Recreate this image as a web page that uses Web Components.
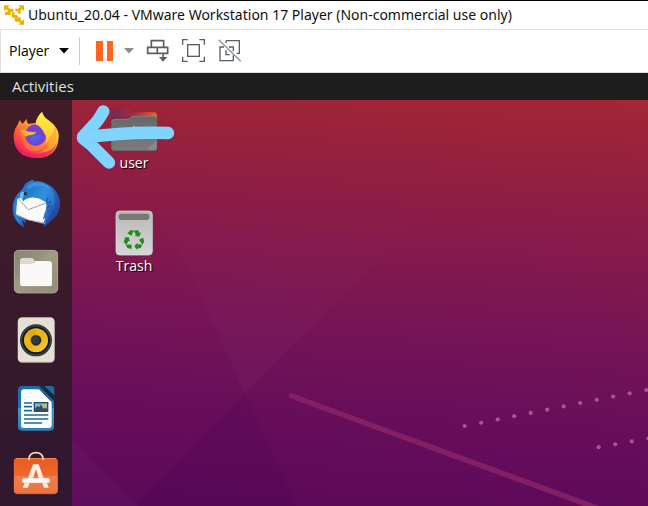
<!DOCTYPE html>
<html lang="en">
<head>
<meta charset="utf-8">
<title>Ubuntu_20.04 - VMware Workstation 17 Player</title>
<style>
html,body{margin:0;height:100%}
body{font-family:"Open Sans","Noto Sans",sans-serif}
</style>
</head>
<body>
<vm-window>
  <title-bar slot="title">Ubuntu_20.04 - VMware Workstation 17 Player (Non-commercial use only)</title-bar>
  <vm-toolbar slot="toolbar"></vm-toolbar>
  <top-panel slot="guest">Activities</top-panel>
  <guest-desktop slot="guest">
    <app-dock slot="dock">
      <dock-item icon="firefox" label="Firefox"></dock-item>
      <dock-item icon="thunderbird" label="Thunderbird"></dock-item>
      <dock-item icon="files" label="Files"></dock-item>
      <dock-item icon="rhythmbox" label="Rhythmbox"></dock-item>
      <dock-item icon="writer" label="LibreOffice Writer"></dock-item>
      <dock-item icon="software" label="Ubuntu Software"></dock-item>
    </app-dock>
    <desktop-icon icon="home">user</desktop-icon>
    <desktop-icon icon="trash">Trash</desktop-icon>
  </guest-desktop>
</vm-window>
<script>
const ICONS = {
vmware: ['0 0 60 60', 20, 20, `<g fill="none" stroke="#edb200" stroke-width="8">
  <path d="M16 26V15H28M34 15H46V26M46 37V46H35M28 22V34H40"/></g>
  <g fill="#edb200"><path d="M0 1h17l-5 6 9 8-6 6-9-9-6 6zM60 1v17l-6-6-9 9-6-6 9-8-5-6zM60 59H43l6-6-9-8 6-6 8 9 6-5z"/>
  <path d="M12 12h16v8H20v10h-8zM32 33h9v16h-9v-8h1zM3 20h13v10H3z"/></g>`],
caret: ['0 0 10 6', 10, 6, `<path d="M0 0h10L5 5.500z" fill="currentColor"/>`],
pause: ['0 0 18 22', 18, 22, `<path d="M0 1h7v20H0zM11 1h6v20h-6z" fill="#ff671f"/>`],
keys: ['441 117 72 72', 24, 24, `<g fill="none" stroke="#5b5f62" stroke-width="5">
  <path d="M457 140v-18h37v18M446 142h60v18h-60zM475 142v18"/><path d="M492 160v20"/></g>
  <path d="M480 171h25l-13 14z" fill="#5b5f62"/>`],
full: ['549 117 72 72', 24, 24, `<g fill="none" stroke="#5b5f62" stroke-width="4">
  <path d="M551 134v-15h15M601 119h15v15M616 170v14h-15M566 184h-15v-14"/><rect x="566" y="134" width="35" height="35"/></g>`],
unity: ['657 117 72 72', 24, 24, `<g fill="none" stroke="#5b5f62" stroke-width="4">
  <path d="M681 122h40v38h-8M703 166v16h-40v-41h12M681 122v7M690 141h13v13M681 151v13h11"/></g>
  <path d="M659 119l66 65" stroke="#85949f" stroke-width="4"/>`],
firefox: ['30 30 156 156', 52, 52, `<defs>
  <linearGradient id="a" x1=".85" y1=".1" x2=".25" y2=".9"><stop offset="0" stop-color="#fff04a"/><stop offset=".35" stop-color="#ffb52c"/><stop offset=".65" stop-color="#ff6a3a"/><stop offset="1" stop-color="#f62459"/></linearGradient>
  <radialGradient id="b" cx=".45" cy=".6" r=".6"><stop offset="0" stop-color="#4a6cf0"/><stop offset=".6" stop-color="#6b45cf"/><stop offset="1" stop-color="#9a35d8"/></radialGradient>
  <linearGradient id="c" x1="0" y1="0" x2="0" y2="1"><stop offset="0" stop-color="#fff24c"/><stop offset=".6" stop-color="#ffcf35"/><stop offset="1" stop-color="#ff9a35"/></linearGradient>
  <linearGradient id="d" x1="0" y1="0" x2="1" y2=".6"><stop offset="0" stop-color="#ff7a32"/><stop offset="1" stop-color="#ff9a2e"/></linearGradient></defs>
  <path d="M60 60q2 8 8 11l12-14q-1 9 6 15 10-3 21-2 4-20 19-34 4 15 19 25l16 13q16 17 15 36-2 63-67 64-66-2-68-64 0-20 12-36 2-8 7-14z" fill="url(#a)"/>
  <path d="M44 124q13 37 58 38 52-2 69-40-8 51-62 52-52-2-65-50z" fill="#ee157a" opacity=".6"/>
  <circle cx="107" cy="105" r="32" fill="url(#b)"/>
  <path d="M106 72q4-22 20-36 4 15 19 25 27 18 30 48-4 39-38 47 18-19 11-41-3 15-14 19 11-17-1-34-9-21-27-28z" fill="url(#c)"/>
  <path d="M144 114q4 17-5 29-10 11-24 16 46-4 55-45 3-21-7-38 2 28-19 38z" fill="#ff9d30" opacity=".65"/>
  <path d="M60 92q6 0 14 6 0 26 21 38 22 6 39-8-8 26-36 26-34-7-38-62z" fill="url(#d)" opacity=".5"/>
  <path d="M61 91q8-2 17 1 8 4 30 4-3 8-18 10-8-1-12 5-11-8-17-20z" fill="#ffb52d"/>`],
thunderbird: ['30 24 156 156', 52, 52, `<defs><linearGradient id="a" x1="0" y1="0" x2="1" y2="1"><stop offset="0" stop-color="#2587df"/><stop offset=".5" stop-color="#2767c9"/><stop offset="1" stop-color="#203888"/></linearGradient>
  <linearGradient id="b" x1="0" y1="0" x2="1" y2=".8"><stop offset="0" stop-color="#196abc"/><stop offset=".55" stop-color="#3590dc"/><stop offset="1" stop-color="#2756bc"/></linearGradient></defs>
  <path d="M89 33q8-4 14-3l-4 5q18-3 35 3 39 15 46 55 3 39-27 60l-23 20 4-17-9 5-50-14 4 15-12-12 5 22Q39 155 38 118q-1-36 29-60 7-19 22-25z" fill="url(#a)"/>
  <path d="M57 84q-12 17-10 43 3 20 12 30" stroke="#2585d8" stroke-width="8" fill="none"/>
  <path d="M52 87l20-9 56-2q13 2 12 19l-4 63-49-8-39-18z" fill="#fafafa"/>
  <path d="M49 132l37 18 50 7-1 5-53-12-33-15z" fill="#c1c1c6"/>
  <path d="M56 87l29 32 51-19" fill="none" stroke="#8e8e94" stroke-width="2.500"/>
  <path d="M66 68q2-28 32-33 33-5 55 20 19 26 10 55l-15 30-19 25 7-22-8 6 6-20q15-31-4-37-23-15-50-6-8 3-10 8-10-10-4-26z" fill="url(#b)"/>
  <path d="M78 51q14-18 40-13 20 3 30 16-38-16-58 1-10 2-12-4z" fill="#64b9f3" opacity=".35"/>
  <path d="M62 68q7-5 13-1l-4 8q-2 8-3 15-12-9-6-22z" fill="#66c2ef"/>
  <circle cx="76" cy="71" r="5" fill="#15192a"/><circle cx="77" cy="70" r="2" fill="#8b735e"/>
  <path d="M144 80l-5 21 13-7-9 19 15-6-14 19 17-5-20 21" fill="none" stroke="#194da3" stroke-width="3" opacity=".7"/>`],
files: ['30 30 156 156', 52, 52, `<defs><linearGradient id="a" x1="0" y1="0" x2=".8" y2="1"><stop offset="0" stop-color="#898375"/><stop offset=".5" stop-color="#9a9481"/><stop offset="1" stop-color="#898371"/></linearGradient></defs>
  <rect x="42" y="42" width="132" height="133" rx="15" fill="#1d131d"/><rect x="42" y="42" width="132" height="130" rx="14" fill="url(#a)"/>
  <path d="M45 140L145 44h14q13 1 13 13v99q-1 13-14 13H59q-13-1-14-14z" fill="#aaa38d" opacity=".35"/>
  <rect x="43" y="43" width="130" height="128" rx="13" fill="none" stroke="#b9b3a2" stroke-width="2"/>
  <path d="M60 75q0-9 9-9h26q6 0 9 8h44q8 0 8 8v64q0 7-8 7H68q-8 0-8-7z" fill="#6d6757" opacity=".5"/>
  <path d="M60 74q0-8 8-8h27q6 0 9 8l-5 10H60z" fill="#dedacf"/>
  <path d="M60 84h35q7 0 10-9h43q8 0 8 8v61q0 7-8 7H68q-8 0-8-7z" fill="#faf9f7"/>`],
rhythmbox: ['30 36 156 156', 52, 52, `<defs><linearGradient id="a" x1="0" y1="0" x2="1" y2="1"><stop offset="0" stop-color="#f5c518"/><stop offset=".5" stop-color="#e9b013"/><stop offset="1" stop-color="#f8d237"/></linearGradient></defs>
  <rect x="53" y="46" width="111" height="136" rx="13" fill="#b8b2a2"/><rect x="54" y="47" width="109" height="132" rx="12" fill="#e5e0d5"/>
  <circle cx="108" cy="115" r="48" fill="#303640"/><circle cx="108" cy="115" r="44" fill="none" stroke="#434c57" stroke-width="2"/><circle cx="108" cy="115" r="41" fill="#12151b"/>
  <circle cx="108" cy="115" r="36" fill="url(#a)"/><path d="M108 115L74 103q8-21 32-24z" fill="#b98a16" opacity=".3"/><circle cx="108" cy="115" r="16" fill="#272b30"/><circle cx="107" cy="113" r="11" fill="#353a3e"/>`],
writer: ['30 30 156 156', 52, 52, `<defs><linearGradient id="a" x1="0" y1="0" x2="0" y2="1"><stop offset="0" stop-color="#176caa"/><stop offset=".49" stop-color="#1977b3"/><stop offset=".5" stop-color="#4095c2"/><stop offset="1" stop-color="#2885b7"/></linearGradient></defs>
  <path d="M67 42h54l41 42v79q0 13-13 13H67q-13 0-13-13V55q0-13 13-13z" fill="url(#a)"/>
  <path d="M72 52h46l37 37v70q0 9-9 9H72q-9 0-9-9V61q0-9 9-9z" fill="#fdfdfd"/>
  <path d="M118 42l44 45v-16l-29-29zM118 52l37 37" fill="#15263e" stroke="#15405f" stroke-width="2"/>
  <path d="M133 42h22q8 1 8 9v19z" fill="#1e6c9c"/>
  <path d="M72 93h24M72 104h24M72 116h24M72 129h73M72 141h73M72 153h54" stroke="#176c9c" stroke-width="5"/>
  <rect x="101" y="90" width="44" height="30" fill="#1c4f73"/><path d="M105 94h36v22h-36z" fill="#7bbcdb"/><circle cx="135" cy="100" r="5" fill="#eeb523"/><path d="M105 117v-7l7-8 6 3 5-8 7 13 7-3 4 5v5z" fill="#454b4c"/>`],
software: ['30 30 156 156', 52, 52, `<defs><linearGradient id="a" x1="0" y1="0" x2="0" y2="1"><stop offset="0" stop-color="#e65b20"/><stop offset=".49" stop-color="#f2672b"/><stop offset=".5" stop-color="#f07d4b"/><stop offset="1" stop-color="#ed743f"/></linearGradient></defs>
  <rect x="41" y="55" width="133" height="108" rx="12" fill="#a74021"/><rect x="42" y="54" width="131" height="107" rx="11" fill="url(#a)"/>
  <path d="M47 56h121" stroke="#ff9a65" stroke-width="2"/><path d="M87 61V56q2-18 21-18t21 18v5" fill="none" stroke="#f1dfb8" stroke-width="5"/>
  <path d="M99 73h17l15 42h-15l-8-27-9 27H84zM74 129h15l-6 14H68zM127 129h14l5 14h-14z" fill="#fdeee5"/><rect x="66" y="114" width="84" height="15" rx="7" fill="#fff8f0" stroke="#d7a080"/>`],
home: ['120 36 144 144', 48, 48, `<defs><linearGradient id="a"><stop offset="0" stop-color="#702b54"/><stop offset=".5" stop-color="#a02d42"/><stop offset="1" stop-color="#ee6429"/></linearGradient><linearGradient id="b" x1="0" y1="0" x2="0" y2="1"><stop offset="0" stop-color="#676767"/><stop offset="1" stop-color="#7c7c7c"/></linearGradient></defs>
  <path d="M124 51q1-9 9-9h40q5 0 10 10h68q10 0 10 10v53H124z" fill="url(#a)"/>
  <path d="M124 158V82q0-10 9-10h40q6 0 10-6 2-3 8-3h60q10 0 10 9v86q0 10-10 10H133q-9 0-9-10z" fill="url(#b)"/>
  <path d="M125 82q0-9 9-9h40q6 0 10-6 2-3 8-3h60q8 0 9 8" fill="none" stroke="#999" stroke-width="1.500"/><path d="M228 167l33-33v25q-1 8-9 8z" fill="#888"/><path d="M125 160q1 7 9 7h116q10 0 11-8" fill="none" stroke="#555" stroke-width="2"/>
  <path d="M173 112l19-19 19 19h-4v20h-4v-11h-3v10h-24v-20z" fill="#e4e4e4"/>`],
trash: ['60 30 144 144', 48, 48, `<defs><linearGradient id="a" x1="0" y1="0" x2="0" y2="1"><stop offset="0" stop-color="#b8b8b8"/><stop offset="1" stop-color="#d6d6d6"/></linearGradient></defs>
  <rect x="76" y="32" width="113" height="136" rx="13" fill="#4d424a"/><rect x="78" y="33" width="109" height="132" rx="11" fill="url(#a)" stroke="#dedede" stroke-width="2"/>
  <rect x="86" y="41" width="92" height="19" rx="8" fill="#777"/>
  <g fill="#238a20"><g id="arm"><path d="M121 91h11l-8 16-12-7zM135 91h9l5 8 4-2-5 13-14-3 4-3-6-9z"/></g><use href="#arm" transform="rotate(120 132 120)"/><use href="#arm" transform="rotate(240 132 120)"/></g>`],
arrow: ['18 15 306 210', 102, 70, `<path d="M294 114Q170 110 40 128M100 49Q85 77 70 91L39 125 M39 130L61 147 117 203" fill="none" stroke="#80d4ff" stroke-width="37" stroke-linecap="round" stroke-linejoin="round"/>`]
};

function define(name, render) {
  customElements.define(name, class extends HTMLElement {
    connectedCallback() {
      if (this.shadowRoot) return;
      const t = document.createElement('template');
      t.innerHTML = render(this);
      this.attachShadow({mode: 'open'}).append(t.content.cloneNode(true));
    }
  });
}

define('ui-icon', el => {
  const [box, w, h, art] = ICONS[el.getAttribute('name')];
  return `<style>:host{display:block;flex:none}svg{display:block}</style>
    <svg viewBox="${box}" width="${w}" height="${h}" aria-hidden="true">${art}</svg>`;
});

define('vm-window', () => `<style>
  :host{display:flex;flex-direction:column;min-height:100vh;background:#fff;border-top:1px solid #000;box-sizing:border-box}
  main{flex:1;display:flex;flex-direction:column}
  </style><slot name="title"></slot><slot name="toolbar"></slot><main><slot name="guest"></slot></main>`);

define('title-bar', () => `<style>
  :host{display:block;border-bottom:1px solid #e0e0e0}
  header{display:flex;align-items:center;gap:4px;padding:0 4px;height:28px}
  h1{margin:0;font-family:"Noto Sans","Open Sans",sans-serif;font-size:14px;line-height:28px;font-weight:400;color:#111;white-space:nowrap}
  </style><header><ui-icon name="vmware"></ui-icon><h1><slot></slot></h1></header>`);

define('tool-button', () => `<style>
  :host{display:block;flex:none}
  button{display:flex;align-items:center;gap:10px;margin:0;padding:0;border:0;background:none;color:inherit;font:inherit;line-height:24px}
  </style><button type="button"><slot></slot></button>`);

define('vm-toolbar', () => `<style>
  :host{display:block;border-bottom:1px solid #e0e0e0;border-left:1px solid #e0e0e0}
  nav{display:flex;align-items:center;gap:12px;height:42px;padding:0 8px;font-size:14px;color:#111}
  hr{width:1px;height:28px;margin:0 6px 0 0;border:0;background:#ccc}
  .menu{color:#000}.drop{color:#8b8b8b}
  .run{display:flex;align-items:center;gap:10px}
  </style><nav>
  <div class="run"><tool-button class="menu">Player<ui-icon name="caret"></ui-icon></tool-button><hr>
  <tool-button><ui-icon name="pause"></ui-icon></tool-button>
  <tool-button class="drop"><ui-icon name="caret"></ui-icon></tool-button></div>
  <tool-button><ui-icon name="keys"></ui-icon></tool-button>
  <tool-button><ui-icon name="full"></ui-icon></tool-button>
  <tool-button><ui-icon name="unity"></ui-icon></tool-button></nav>`);

define('top-panel', () => `<style>
  :host{display:block;background:#1d1d1d;color:#dfdfdf}
  button{display:block;border:0;margin:0;padding:0 12px;background:none;color:inherit;font-family:inherit;font-size:15px;line-height:27px}
  </style><button type="button"><slot></slot></button>`);

define('app-dock', () => `<style>
  :host{display:block;width:72px;flex:none;background:linear-gradient(#421d27,#391a2b 50%,#2f172f)}
  nav{display:flex;flex-direction:column;align-items:center;gap:16px;padding-top:10px}
  </style><nav><slot></slot></nav>`);

define('dock-item', el => `<style>
  :host{display:block}button{display:block;margin:0;padding:0;border:0;background:none}
  </style><button type="button" aria-label="${el.getAttribute('label')}"><ui-icon name="${el.getAttribute('icon')}"></ui-icon></button>`);

define('desktop-icon', el => `<style>
  :host{display:block}
  button{display:flex;flex-direction:column;align-items:center;width:100px;margin:0;padding:0;border:0;background:none;color:#fff;font-family:inherit;font-size:14px;line-height:16px;text-shadow:1px 1px 1px #000}
  </style><button type="button"><ui-icon name="${el.getAttribute('icon')}"></ui-icon><span><slot></slot></span></button>`);

define('wall-paper', () => {
  let dots = '';
  for (let i = 0; i < 30; i++) dots += `<circle cx="${392.7 + i * 16.5}" cy="${326 - i * 3.27}" r="2.100"/>`;
  for (let i = 0; i < 20; i++) dots += `<circle cx="${526.6 + i * 16.6}" cy="${347.2 - i * 2.9}" r="2.100"/>`;
  return `<style>:host{display:block;background:linear-gradient(183deg,#a32735 0%,#93203f 18%,#851a4c 36%,#751456 56%,#670e5a 76%,#5b0959 100%)}
  svg{display:block;width:100%;height:100%}</style>
  <svg viewBox="0 0 576 406" preserveAspectRatio="xMinYMin slice" aria-hidden="true">
  <defs><linearGradient id="fade" x1="0" y1="0" x2="0" y2="1"><stop offset="0" stop-color="#fff" stop-opacity="0"/><stop offset="1" stop-color="#fff" stop-opacity=".025"/></linearGradient></defs>
  <path d="M80 90L173 293 375 90z" fill="url(#fade)"/>
  <path d="M173 293L62 406H224z" fill="#300050" opacity=".1"/><path d="M0 341V406H66z" fill="#fff" opacity=".025"/>
  <path d="M217 295L540 413.500" stroke="#832065" stroke-width="5.500"/><g fill="#a3559a">${dots}</g></svg>`;
});

define('guest-desktop', () => `<style>
  :host{display:flex;flex:1}
  section{position:relative;flex:1;overflow:hidden}
  wall-paper{position:absolute;inset:0}
  .icons{position:relative;display:flex;flex-direction:column;align-items:flex-start;gap:39px;padding:7px 12px}
  .mark{position:absolute;left:4px;top:0}
  </style><slot name="dock"></slot><section><wall-paper></wall-paper><div class="icons"><slot></slot></div><ui-icon class="mark" name="arrow"></ui-icon></section>`);
</script>
</body>
</html>
